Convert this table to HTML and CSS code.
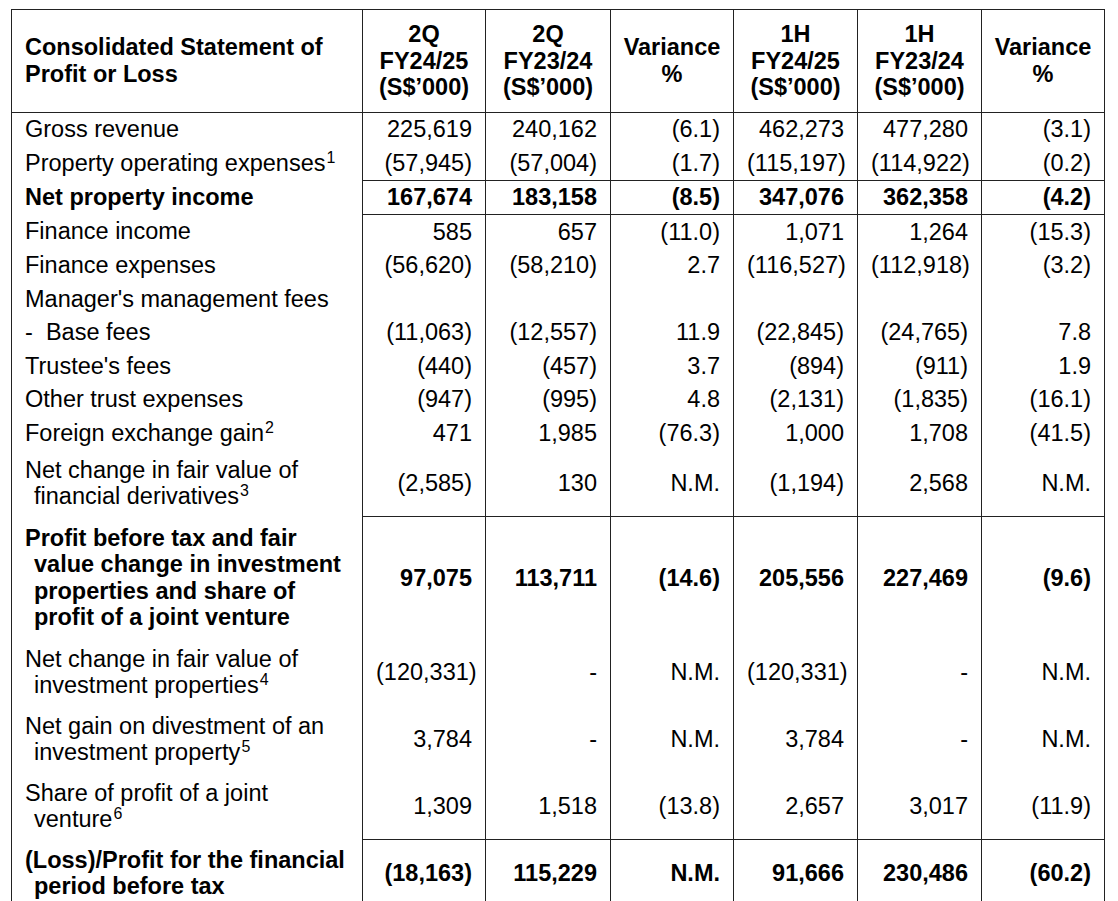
FILE: index.html
```html
<!DOCTYPE html>
<html lang="en">
<head>
<meta charset="utf-8">
<title>Consolidated Statement of Profit or Loss</title>
<link rel="stylesheet" href="styles.css">
</head>
<body>
<div class="page">
<table class="pl">
  <colgroup>
    <col class="c-label">
    <col class="c-num">
    <col class="c-num2">
    <col class="c-num">
    <col class="c-num3">
    <col class="c-num3">
    <col class="c-num">
  </colgroup>
  <thead>
    <tr>
      <th class="h-label">Consolidated Statement of<br>Profit or Loss</th>
      <th class="h-num">2Q<br>FY24/25<br>(S$’000)</th>
      <th class="h-num">2Q<br>FY23/24<br>(S$’000)</th>
      <th class="h-num">Variance<br>%</th>
      <th class="h-num">1H<br>FY24/25<br>(S$’000)</th>
      <th class="h-num">1H<br>FY23/24<br>(S$’000)</th>
      <th class="h-num">Variance<br>%</th>
    </tr>
  </thead>
  <tbody>
    <tr>
      <td class="lbl">Gross revenue</td>
      <td class="num">225,619</td><td class="num">240,162</td><td class="num">(6.1)</td>
      <td class="num">462,273</td><td class="num">477,280</td><td class="num">(3.1)</td>
    </tr>
    <tr>
      <td class="lbl">Property operating expenses<sup>1</sup></td>
      <td class="num">(57,945)</td><td class="num">(57,004)</td><td class="num">(1.7)</td>
      <td class="num">(115,197)</td><td class="num">(114,922)</td><td class="num">(0.2)</td>
    </tr>
    <tr class="bold ruled">
      <td class="lbl">Net property income</td>
      <td class="num">167,674</td><td class="num">183,158</td><td class="num">(8.5)</td>
      <td class="num">347,076</td><td class="num">362,358</td><td class="num">(4.2)</td>
    </tr>
    <tr class="ruled">
      <td class="lbl">Finance income</td>
      <td class="num">585</td><td class="num">657</td><td class="num">(11.0)</td>
      <td class="num">1,071</td><td class="num">1,264</td><td class="num">(15.3)</td>
    </tr>
    <tr>
      <td class="lbl">Finance expenses</td>
      <td class="num">(56,620)</td><td class="num">(58,210)</td><td class="num">2.7</td>
      <td class="num">(116,527)</td><td class="num">(112,918)</td><td class="num">(3.2)</td>
    </tr>
    <tr>
      <td class="lbl">Manager's management fees</td>
      <td class="num"></td><td class="num"></td><td class="num"></td>
      <td class="num"></td><td class="num"></td><td class="num"></td>
    </tr>
    <tr>
      <td class="lbl">-&nbsp;&nbsp;Base fees</td>
      <td class="num">(11,063)</td><td class="num">(12,557)</td><td class="num">11.9</td>
      <td class="num">(22,845)</td><td class="num">(24,765)</td><td class="num">7.8</td>
    </tr>
    <tr>
      <td class="lbl">Trustee's fees</td>
      <td class="num">(440)</td><td class="num">(457)</td><td class="num">3.7</td>
      <td class="num">(894)</td><td class="num">(911)</td><td class="num">1.9</td>
    </tr>
    <tr>
      <td class="lbl">Other trust expenses</td>
      <td class="num">(947)</td><td class="num">(995)</td><td class="num">4.8</td>
      <td class="num">(2,131)</td><td class="num">(1,835)</td><td class="num">(16.1)</td>
    </tr>
    <tr>
      <td class="lbl">Foreign exchange gain<sup>2</sup></td>
      <td class="num">471</td><td class="num">1,985</td><td class="num">(76.3)</td>
      <td class="num">1,000</td><td class="num">1,708</td><td class="num">(41.5)</td>
    </tr>
    <tr class="two">
      <td class="lbl hang">Net change in fair value of<br>financial derivatives<sup>3</sup></td>
      <td class="num">(2,585)</td><td class="num">130</td><td class="num">N.M.</td>
      <td class="num">(1,194)</td><td class="num">2,568</td><td class="num">N.M.</td>
    </tr>
    <tr class="bold ruled four">
      <td class="lbl hang">Profit before tax and fair<br>value change in investment<br>properties and share of<br>profit of a joint venture</td>
      <td class="num">97,075</td><td class="num">113,711</td><td class="num">(14.6)</td>
      <td class="num">205,556</td><td class="num">227,469</td><td class="num">(9.6)</td>
    </tr>
    <tr class="two">
      <td class="lbl hang">Net change in fair value of<br>investment properties<sup>4</sup></td>
      <td class="num">(120,331)</td><td class="num">-</td><td class="num">N.M.</td>
      <td class="num">(120,331)</td><td class="num">-</td><td class="num">N.M.</td>
    </tr>
    <tr class="two">
      <td class="lbl hang">Net gain on divestment of an<br>investment property<sup>5</sup></td>
      <td class="num">3,784</td><td class="num">-</td><td class="num">N.M.</td>
      <td class="num">3,784</td><td class="num">-</td><td class="num">N.M.</td>
    </tr>
    <tr class="two">
      <td class="lbl hang">Share of profit of a joint<br>venture<sup>6</sup></td>
      <td class="num">1,309</td><td class="num">1,518</td><td class="num">(13.8)</td>
      <td class="num">2,657</td><td class="num">3,017</td><td class="num">(11.9)</td>
    </tr>
    <tr class="bold ruled two">
      <td class="lbl hang">(Loss)/Profit for the financial<br>period before tax</td>
      <td class="num">(18,163)</td><td class="num">115,229</td><td class="num">N.M.</td>
      <td class="num">91,666</td><td class="num">230,486</td><td class="num">(60.2)</td>
    </tr>
  </tbody>
</table>
</div>
</body>
</html>
```
FILE: styles.css
```css
* {
  box-sizing: border-box;
}

body {
  margin: 0;
  background: #ffffff;
  color: #000000;
  font-family: "Liberation Sans", Arial, sans-serif;
}

.page {
  padding: 9px 0 0 11px;
}

.pl {
  border-collapse: collapse;
  table-layout: fixed;
  width: 1094px;
  font-size: 23.5px;
  line-height: 26.5px;
  border: 1px solid #222222;
}

.c-label { width: 351px; }
.c-num { width: 123px; }
.c-num2 { width: 125px; }
.c-num3 { width: 124px; }

.pl th {
  font-weight: bold;
  padding: 11px 6px;
  vertical-align: middle;
  border-bottom: 1px solid #222222;
}

.h-label {
  text-align: left;
  padding-left: 13px !important;
}

.h-num {
  text-align: center;
  border-left: 1px solid #222222;
}

.pl td {
  padding: 3.5px 13px;
  vertical-align: middle;
}

.lbl {
  text-align: left;
  white-space: nowrap;
}

.hang {
  padding-left: 22px !important;
  text-indent: -9px;
}

.num {
  text-align: right;
  border-left: 1px solid #222222;
  white-space: nowrap;
}

.bold td {
  font-weight: bold;
}

.ruled .num {
  border-top: 1px solid #222222;
}

.two td {
  padding-top: 7px;
  padding-bottom: 7px;
}

.four td {
  padding-top: 8px;
  padding-bottom: 8px;
}

sup {
  font-size: 0.68em;
  line-height: 0;
  vertical-align: 0.5em;
  margin-left: 1px;
}
```
